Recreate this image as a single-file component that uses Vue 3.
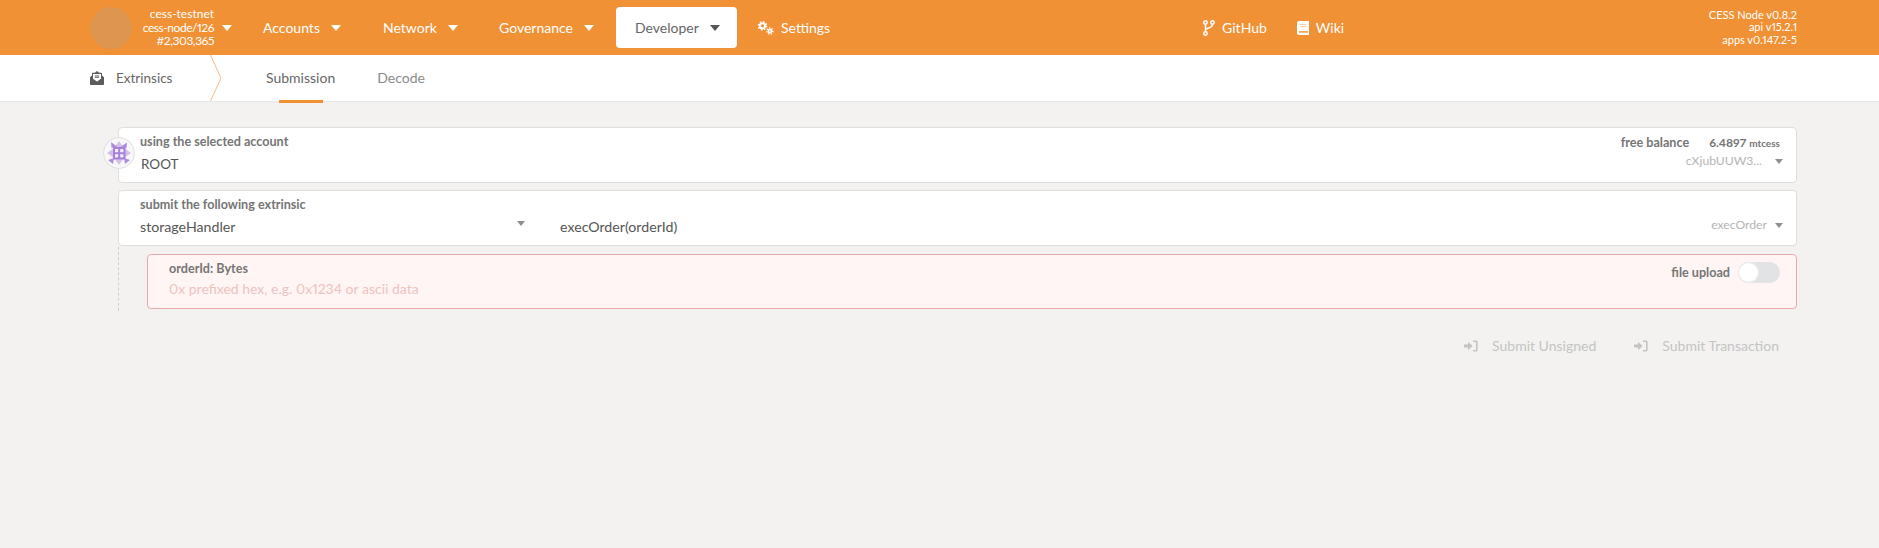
<script setup>
const navItems = [
  { label: 'Accounts', width: 120 },
  { label: 'Network', width: 116 },
  { label: 'Governance', width: 117 },
]
</script>

<template>
  <div class="page">
    <header class="topbar">
      <div class="chain">
        <div class="chain-logo"></div>
        <div class="chain-info">
          <div>cess-testnet</div>
          <div class="tight">cess-node/126</div>
          <div class="tight">#2,303,365</div>
        </div>
        <i class="caret caret-light"></i>
      </div>
      <nav class="nav">
        <a v-for="item in navItems" :key="item.label" class="nav-item" :style="{ width: item.width + 'px' }">
          {{ item.label }}<i class="caret caret-light"></i>
        </a>
        <a class="nav-item nav-active">Developer<i class="caret caret-dark"></i></a>
        <a class="nav-item nav-settings">
          <svg class="ico-cogs" viewBox="0 0 20 16" width="18" height="14">
            <circle cx="6" cy="5.5" r="3" fill="none" stroke="#fff" stroke-width="2.2" />
            <circle cx="6" cy="5.5" r="4.6" fill="none" stroke="#fff" stroke-width="1.8" stroke-dasharray="1.8 1.8" />
            <circle cx="14.5" cy="11.5" r="1.8" fill="none" stroke="#fff" stroke-width="1.8" />
            <circle cx="14.5" cy="11.5" r="3.5" fill="none" stroke="#fff" stroke-width="1.6" stroke-dasharray="1.5 1.5" />
          </svg>
          Settings
        </a>
      </nav>
      <div class="links">
        <a class="link link-github">
          <svg viewBox="0 0 12 16" width="12" height="16">
            <circle cx="2.5" cy="2.5" r="1.7" fill="none" stroke="#fff" stroke-width="1.5" />
            <circle cx="2.5" cy="13.5" r="1.7" fill="none" stroke="#fff" stroke-width="1.5" />
            <circle cx="9.5" cy="2.5" r="1.7" fill="none" stroke="#fff" stroke-width="1.5" />
            <path d="M2.5 4.5V11.5M2.5 10C2.5 7.5 9.5 8.5 9.5 4.5" fill="none" stroke="#fff" stroke-width="1.5" />
          </svg>
          GitHub
        </a>
        <a class="link link-wiki">
          <svg viewBox="0 0 12 14" width="12" height="14">
            <path d="M2 0H12V14H2C.9 14 0 13.1 0 12V2C0 .9.9 0 2 0Z" fill="#fff" />
            <path d="M2 10.2H11V11.6H2Z" fill="#f19135" />
            <path d="M3 3H9V4H3ZM3 5H9V6H3Z" fill="#f8cfa5" />
          </svg>
          Wiki
        </a>
      </div>
      <div class="versions">
        <div>CESS Node v0.8.2</div>
        <div>api v15.2.1</div>
        <div>apps v0.147.2-5</div>
      </div>
    </header>

    <div class="subbar">
      <div class="section">
        <svg viewBox="0 0 14 14" width="14" height="14">
          <path d="M0 6.2L2 4.6V2.4C2 2 2.3 1.8 2.6 1.8H4.8L7 0L9.2 1.8H11.4C11.7 1.8 12 2 12 2.4V4.6L14 6.2V13C14 13.6 13.6 14 13 14H1C.4 14 0 13.6 0 13Z" fill="#5c5c5c" />
          <path d="M3 3H11V7.8L7 10.4L3 7.8Z" fill="#fff" />
          <path d="M4.8 4.6H9.2V5.4H4.8ZM4.8 6.2H9.2V7H4.8Z" fill="#5c5c5c" />
        </svg>
        <span>Extrinsics</span>
      </div>
      <svg class="chevron" viewBox="0 0 12 46" width="12" height="46">
        <path d="M.5 0L11 23L.5 46" fill="none" stroke="#f7bc85" stroke-width="1" />
      </svg>
      <div class="tabs">
        <a class="tab tab-active">Submission</a>
        <a class="tab">Decode</a>
      </div>
    </div>

    <main class="content">
      <section class="card account-card">
        <div class="identicon">
          <svg viewBox="0 0 32 32" width="32" height="32">
            <circle cx="16" cy="16" r="15.5" fill="#f8f8f8" stroke="#dfdfdf" />
            <g fill="#d3c0ec">
              <path d="M4 16L11 11V21ZM28 16L21 11V21ZM16 4L11 11H21ZM16 28L11 21H21Z" />
            </g>
            <g fill="#b08ce0">
              <path d="M8 5L14 9.5L8.5 11ZM24 5.5L23.5 11L18 9.5ZM5 23L11 21L10 27ZM27 23L21 21L22 27Z" />
              <rect x="10" y="10" width="12.5" height="12.5" fill="#a781dc" />
            </g>
            <g fill="#f3edfb">
              <rect x="12" y="12" width="3.2" height="3.2" />
              <rect x="17.2" y="12" width="3.2" height="3.2" />
              <rect x="12" y="17.2" width="3.2" height="3.2" />
              <rect x="17.2" y="17.2" width="3.2" height="3.2" />
            </g>
          </svg>
        </div>
        <div class="card-col">
          <label class="field-label">using the selected account</label>
          <div class="field-value root-value">ROOT</div>
        </div>
        <div class="card-side">
          <div class="balance">
            <span class="balance-label">free balance</span>
            <span class="balance-value">6.4897 <small>mtcess</small></span>
          </div>
          <div class="side-value side-account">cXjubUUW3...<i class="caret caret-muted"></i></div>
        </div>
      </section>

      <section class="card extrinsic-card">
        <div class="section-col">
          <label class="field-label">submit the following extrinsic</label>
          <div class="field-value">storageHandler</div>
          <i class="caret caret-muted section-caret"></i>
        </div>
        <div class="method-col">
          <div class="field-value">execOrder(orderId)</div>
          <div class="side-value">execOrder<i class="caret caret-muted"></i></div>
        </div>
      </section>

      <div class="params">
        <section class="card param-card">
          <div class="card-col">
            <label class="field-label">orderId: Bytes</label>
            <div class="placeholder">0x prefixed hex, e.g. 0x1234 or ascii data</div>
          </div>
          <div class="upload">
            <span>file upload</span>
            <span class="toggle"><span class="knob"></span></span>
          </div>
        </section>
      </div>

      <div class="actions">
        <button class="action">
          <svg viewBox="0 0 14 12" width="14" height="12"><path d="M0 4.5H4V1.8L8.6 6L4 10.2V7.5H0ZM9 .5H12C13.1.5 13.6 1.2 13.6 2V10C13.6 10.8 13.1 11.5 12 11.5H9V10H11.6C12 10 12 9.8 12 9.5V2.5C12 2.2 12 2 11.6 2H9Z" fill="#c4c4c4" /></svg>
          Submit Unsigned
        </button>
        <button class="action">
          <svg viewBox="0 0 14 12" width="14" height="12"><path d="M0 4.5H4V1.8L8.6 6L4 10.2V7.5H0ZM9 .5H12C13.1.5 13.6 1.2 13.6 2V10C13.6 10.8 13.1 11.5 12 11.5H9V10H11.6C12 10 12 9.8 12 9.5V2.5C12 2.2 12 2 11.6 2H9Z" fill="#c4c4c4" /></svg>
          Submit Transaction
        </button>
      </div>
    </main>
  </div>
</template>

<style>
html, body { margin: 0; background: #f3f2f0; }
</style>

<style scoped>
.page {
  width: 1879px;
  height: 548px;
  background: #f3f2f0;
  font-family: Lato, "Open Sans", "Liberation Sans", sans-serif;
  font-variant-numeric: proportional-nums;
  font-size: 14px;
  color: #4e4e4e;
  overflow: hidden;
}
.caret {
  display: inline-block;
  width: 0;
  height: 0;
  border-left: 5px solid transparent;
  border-right: 5px solid transparent;
  border-top: 6px solid currentColor;
}
.caret-light { color: #fff; }
.caret-dark { color: #555; }
.caret-muted { color: #8f8f8f; border-left-width: 4.5px; border-right-width: 4.5px; border-top-width: 5px; }

.topbar {
  height: 55px;
  background: #f19135;
  color: #fff;
  display: flex;
  align-items: center;
  padding-left: 90px;
  padding-right: 82px;
}
.chain { display: flex; align-items: center; width: 173px; flex: none; }
.chain-logo { width: 42px; height: 42px; border-radius: 50%; background: #dd9550; flex: none; }
.chain-info {
  width: 82px;
  text-align: right;
  font-size: 12px;
  line-height: 13.5px;
  white-space: nowrap;
}
.chain-info > div { display: flex; justify-content: flex-end; }
.chain-info .tight { letter-spacing: -0.45px; }
.chain > .caret { margin-left: 8px; }
.nav { display: flex; align-items: center; flex: none; }
.nav-item { display: flex; align-items: center; white-space: nowrap; }
.nav-item .caret { margin-left: 11px; }
.nav-active {
  margin-left: 0;
  width: 121px;
  height: 41px;
  box-sizing: border-box;
  padding-left: 19px;
  background: #fff;
  color: #666;
  border-radius: 4px;
}
.nav-settings { margin-left: 20px; }
.ico-cogs { margin-right: 6px; }
.links { display: flex; align-items: center; margin-left: 373px; flex: none; }
.link { display: flex; align-items: center; gap: 7px; }
.link-wiki { margin-left: 30px; }
.versions {
  margin-left: auto;
  text-align: right;
  font-size: 11px;
  line-height: 12.5px;
}

.subbar {
  height: 46px;
  background: #fff;
  display: flex;
  align-items: center;
  padding-left: 90px;
  box-shadow: 0 1px 1px #e8e8e8;
}
.section { display: flex; align-items: center; gap: 12px; width: 120px; flex: none; color: #666; font-size: 13.5px; }
.chevron { flex: none; }
.tabs { display: flex; margin-left: 44px; height: 46px; }
.tab { display: flex; align-items: center; color: #8a8a8a; padding-bottom: 2px; box-sizing: border-box; margin-right: 42px; position: relative; }
.tab-active { color: #666; }
.tab-active::after {
  content: "";
  position: absolute;
  left: 13px;
  width: 44px;
  bottom: -2px;
  height: 3px;
  background: #f19135;
}

.content {
  padding: 26px 82px 0 118px;
  display: flex;
  flex-direction: column;
}
.card {
  background: #fff;
  border: 1px solid #e0dedb;
  border-radius: 4px;
  box-sizing: border-box;
  display: flex;
  position: relative;
}
.account-card { height: 56px; padding: 6px 13px 0 21px; justify-content: space-between; }
.identicon {
  position: absolute;
  left: -16px;
  top: 9px;
  width: 32px;
  height: 32px;
}
.identicon svg { display: block; }
.field-label {
  display: block;
  font-size: 12.6px;
  font-weight: 700;
  line-height: 16px;
  color: #757575;
  white-space: nowrap;
}
.field-value { font-size: 14.2px; line-height: 20px; color: #555; white-space: nowrap; }
.root-value { margin: 4px 0 0 1px; font-size: 13.5px; }
.card-side { display: flex; flex-direction: column; align-items: flex-end; }
.balance { display: flex; gap: 20px; align-items: baseline; font-size: 12.6px; line-height: 16px; font-weight: 700; color: #757575; margin-top: 1px; margin-right: 3px; }
.balance-value { font-size: 12px; }
.balance-value small { font-size: 10px; }
.side-value { display: flex; align-items: center; gap: 8px; color: #b4b4b4; font-size: 12.2px; line-height: 20px; white-space: nowrap; }
.side-account { gap: 13px; }

.extrinsic-card { height: 56px; margin-top: 7px; padding-left: 21px; padding-right: 13px; padding-top: 6px; }
.section-col { width: 420px; flex: none; position: relative; }
.section-col .field-value { margin-top: 4px; }
.section-caret { position: absolute; right: 35px; top: 24px; }
.method-col { flex: 1; display: flex; justify-content: space-between; align-items: flex-start; padding-top: 20px; padding-left: 0; }
.method-col .side-value { margin-top: -2px; }

.params { margin-top: 0; padding: 8px 0 0 29px; position: relative; }
.params::before {
  content: "";
  position: absolute;
  left: 0;
  top: 1px;
  height: 64px;
  border-left: 1px dashed #cfcfcf;
}
.param-card {
  height: 55px;
  background: #fff5f4;
  border-color: #e5abaa;
  padding: 6px 16px 0 21px;
  justify-content: space-between;
}
.placeholder { margin-top: 2px; color: #eec2bf; font-size: 14px; line-height: 20px; white-space: nowrap; }
.upload { display: flex; align-items: center; gap: 8px; height: 22px; margin-top: 0; font-size: 12.6px; font-weight: 700; color: #757575; }
.toggle { display: block; width: 42px; height: 21px; border-radius: 11px; background: #e1e3e5; position: relative; }
.knob { position: absolute; left: 0; top: 0; width: 21px; height: 21px; border-radius: 50%; background: #fff; box-shadow: 0 0 0 1px #e6e6e6 inset; }

.actions { display: flex; justify-content: flex-end; gap: 38px; margin-top: 27px; padding-right: 18px; }
.action {
  display: flex;
  align-items: center;
  gap: 14px;
  padding: 0;
  border: 0;
  background: none;
  font: inherit;
  color: #c4c4c4;
  line-height: 20px;
}
</style>
